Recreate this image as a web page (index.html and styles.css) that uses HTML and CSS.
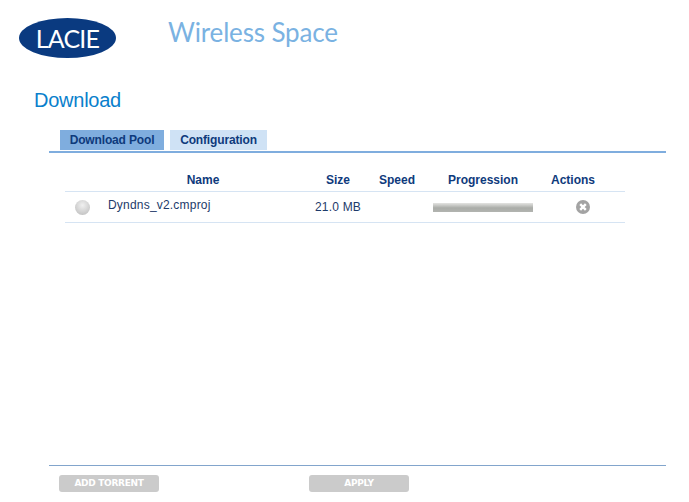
FILE: index.html
```html
<!DOCTYPE html>
<html lang="en">
<head>
<meta charset="UTF-8">
<title>Wireless Space</title>
<link rel="stylesheet" href="styles.css">
</head>
<body>
<div class="header">
  <div class="logo">
    <svg width="97" height="40" viewBox="0 0 97 40"><ellipse cx="48.5" cy="20" rx="48.5" ry="20" fill="#0a3a80"/></svg>
    <span class="logo-text">LACIE</span>
  </div>
  <div class="product">Wireless Space</div>
</div>
<h1 class="title">Download</h1>
<div class="panel">
  <div class="tabs">
    <div class="tab active">Download Pool</div>
    <div class="tab">Configuration</div>
  </div>
  <div class="list">
    <div class="row head">
      <div class="c-state"></div>
      <div class="c-name">Name</div>
      <div class="c-size">Size</div>
      <div class="c-speed">Speed</div>
      <div class="c-prog">Progression</div>
      <div class="c-act">Actions</div>
    </div>
    <div class="row item">
      <div class="c-state"><span class="dot"></span></div>
      <div class="c-name">Dyndns_v2.cmproj</div>
      <div class="c-size">21.0 MB</div>
      <div class="c-speed"></div>
      <div class="c-prog"><div class="bar"></div></div>
      <div class="c-act">
        <svg width="14" height="14" viewBox="0 0 14 14"><circle cx="7" cy="7" r="7" fill="#a3a3a3"/><path d="M4.2 4.2l5.6 5.6M9.8 4.2l-5.6 5.6" stroke="#fff" stroke-width="2.4"/></svg>
      </div>
    </div>
  </div>
  <div class="footer">
    <div class="btn">ADD TORRENT</div>
    <div class="btn">APPLY</div>
  </div>
</div>
</body>
</html>
```

FILE: styles.css
```css
html, body { margin: 0; padding: 0; background: #fff; }
body { width: 689px; height: 502px; overflow: hidden; font-family: "Liberation Sans", Arial, sans-serif; color: #0e3a7c; }

.header { display: flex; padding: 18px 0 0 19px; height: 40px; }
.logo { position: relative; width: 97px; height: 40px; }
.logo svg { display: block; }
.logo-text { position: absolute; inset: 0; text-align: center; line-height: 41px; color: #fff; font-family: "Lato", sans-serif; font-size: 25px; letter-spacing: -0.8px; }
.product { margin-left: 52px; font-family: "Lato", sans-serif; font-size: 26px; line-height: 28px; color: #7ab2e2; letter-spacing: -0.15px; }

.title { margin: 30px 0 0 34px; font-size: 20px; line-height: 24px; font-weight: normal; color: #0a80cc; letter-spacing: -0.25px; }

.panel { margin: 18px 23px 0 49px; }
.tabs { display: flex; gap: 6px; padding-left: 11px; border-bottom: 2px solid #7fadde; height: 21px; }
.tab { width: 97px; height: 20px; background: #cfe2f5; font-size: 12px; font-weight: bold; line-height: 20px; text-align: center; letter-spacing: -0.15px; }
.tab.active { width: 104px; background: #7fadde; }

.list { margin: 15px 41px 0 16px; font-size: 12px; }
.row { display: flex; align-items: center; border-bottom: 1px solid #d6e4f3; }
.head { height: 23px; font-weight: bold; }
.item { height: 30px; letter-spacing: 0.2px; color: #1d3a6a; }
.c-state { width: 35px; padding-left: 10px; box-sizing: border-box; }
.c-name { width: 206px; }
.head .c-name { text-align: center; }
.item .c-name { padding-left: 8px; box-sizing: border-box; margin-top: -5px; }
.c-size { width: 64px; text-align: center; }
.c-speed { width: 54px; text-align: center; }
.c-prog { width: 118px; display: flex; justify-content: center; }
.c-act { width: 83px; display: flex; justify-content: center; box-sizing: border-box; padding-right: 1px; }
.head .c-act { padding-right: 21px; }

.dot { display: block; width: 15px; height: 15px; border-radius: 50%; background: radial-gradient(circle at 50% 35%, #f0f0f0, #c4c4c4 80%); }
.bar { width: 100px; height: 9px; background: linear-gradient(#e4e4e2, #aaaca8 55%, #b2b4b0); }

.footer { margin-top: 242px; border-top: 1px solid #82a5cc; padding: 9px 0 0 10px; display: flex; gap: 150px; }
.btn { width: 100px; height: 17px; border-radius: 3px; background: #cbcbcb; color: #fff; font-size: 9px; font-weight: bold; line-height: 17px; text-align: center; font-family: "DejaVu Sans", sans-serif; letter-spacing: -0.3px; }
```
